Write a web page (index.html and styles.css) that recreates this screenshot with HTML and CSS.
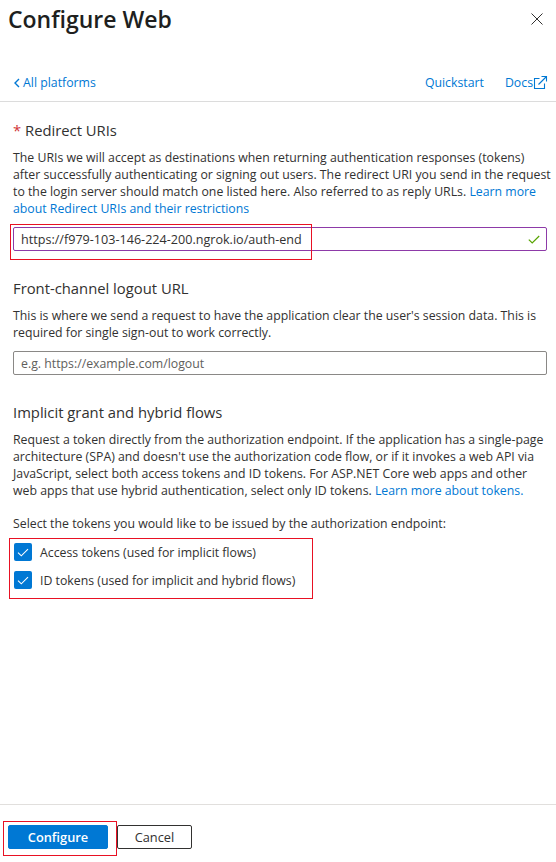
FILE: index.html
```html
<!DOCTYPE html>
<html lang="en">
<head>
<meta charset="utf-8">
<title>Configure Web</title>
<link rel="stylesheet" href="styles.css">
</head>
<body>
<div class="panel">
  <header class="top">
    <h1 class="title">Configure Web</h1>
    <button class="close" aria-label="Close">
      <svg width="12" height="12" viewBox="0 0 12 12"><path d="M0.5 0.5L11.5 11.5M11.5 0.5L0.5 11.5" stroke="#323130" stroke-width="1" fill="none"/></svg>
    </button>
  </header>

  <nav class="subnav">
    <a class="back" href="#">
      <svg width="6" height="10" viewBox="0 0 6 10"><path d="M5 1L1 5l4 4" stroke="#0078d4" stroke-width="1.4" fill="none"/></svg>
      All platforms
    </a>
    <div class="navlinks">
      <a href="#">Quickstart</a>
      <a href="#" class="docs">Docs<svg width="15" height="15" viewBox="0 0 15 15"><path d="M6.5 3.5H1.5V13.5H11.5V8.5" stroke="#0078d4" stroke-width="1.1" fill="none"/><path d="M5.5 9.5L13.5 1.5M8.5 1.5H13.5V6.5" stroke="#0078d4" stroke-width="1.1" fill="none"/></svg></a>
    </div>
  </nav>

  <main class="content">
    <section class="sec">
      <h2 class="heading"><span class="req">*</span> Redirect URIs</h2>
      <p class="desc">The URIs we will accept as destinations when returning authentication responses (tokens) after successfully authenticating or signing out users. The redirect URI you send in the request to the login server should match one listed here. Also referred to as reply URLs. <a href="#">Learn more about Redirect URIs and their restrictions</a></p>
      <div class="field field-valid">
        <span class="value">https://f979-103-146-224-200.ngrok.io/auth-end</span>
        <svg class="ok" width="12" height="9" viewBox="0 0 12 9"><path d="M0.8 4.6L4.2 8 11.2 1" stroke="#57a300" stroke-width="1.2" fill="none"/></svg>
        <span class="mark mark-uri"></span>
      </div>
    </section>

    <section class="sec">
      <h2 class="heading">Front-channel logout URL</h2>
      <p class="desc">This is where we send a request to have the application clear the user's session data. This is required for single sign-out to work correctly.</p>
      <div class="field">
        <span class="placeholder">e.g. https://example.com/logout</span>
      </div>
    </section>

    <section class="sec">
      <h2 class="heading">Implicit grant and hybrid flows</h2>
      <p class="desc">Request a token directly from the authorization endpoint. If the application has a single-page architecture (SPA) and doesn't use the authorization code flow, or if it invokes a web API via JavaScript, select both access tokens and ID tokens. For ASP.NET Core web apps and other web apps that use hybrid authentication, select only ID tokens. <a href="#">Learn more about tokens.</a></p>
      <p class="select-label">Select the tokens you would like to be issued by the authorization endpoint:</p>
      <div class="tokens">
        <label class="check-row">
          <span class="box"><svg width="12" height="9" viewBox="0 0 12 9"><path d="M1 4.6L4.3 7.8 11 1.2" stroke="#fff" stroke-width="1.1" fill="none"/></svg></span>
          Access tokens (used for implicit flows)
        </label>
        <label class="check-row">
          <span class="box"><svg width="12" height="9" viewBox="0 0 12 9"><path d="M1 4.6L4.3 7.8 11 1.2" stroke="#fff" stroke-width="1.1" fill="none"/></svg></span>
          ID tokens (used for implicit and hybrid flows)
        </label>
        <span class="mark mark-tokens"></span>
      </div>
    </section>
  </main>

  <footer class="footer">
    <div class="btn-wrap">
      <button class="btn btn-primary">Configure</button>
      <span class="mark mark-btn"></span>
    </div>
    <button class="btn btn-secondary">Cancel</button>
  </footer>
</div>
</body>
</html>
```

FILE: styles.css
```css
* { box-sizing: border-box; }

html, body {
  margin: 0;
  padding: 0;
  background: #fff;
}

body {
  font-family: "Open Sans", "Noto Sans", sans-serif;
  color: #323130;
  font-size: 12.3px;
}

a { color: #0078d4; text-decoration: none; }

.panel {
  display: flex;
  flex-direction: column;
  height: 100vh;
}

.top {
  display: flex;
  align-items: center;
  justify-content: space-between;
  height: 38px;
  padding: 0 13px 0 8px;
}

.title {
  margin: 0;
  font-size: 23px;
  font-weight: 600;
  line-height: 38px;
  color: #201f1e;
}

.close {
  border: 0;
  background: none;
  padding: 0;
  width: 12px;
  height: 12px;
  display: flex;
}

.subnav {
  height: 64px;
  display: flex;
  align-items: flex-end;
  justify-content: space-between;
  padding: 0 8px 10px 14px;
  border-bottom: 1px solid #dcdcdc;
  line-height: 16px;
}

.back {
  display: flex;
  align-items: center;
  gap: 3px;
}

.navlinks {
  display: flex;
  gap: 21px;
}

.docs {
  display: flex;
  align-items: center;
}

.docs svg { margin-top: -2px; }

.content {
  flex: 1;
  padding: 17px 9px 0 13px;
}

.sec + .sec { margin-top: 26px; }

.heading {
  margin: 0;
  font-size: 14.8px;
  font-weight: 400;
  line-height: 22px;
  color: #323130;
}

.req { color: #d13438; }

.desc {
  margin: 8px -4px 0 0;
  line-height: 17px;
}

.field {
  position: relative;
  margin-top: 10px;
  height: 24px;
  border: 1px solid #8a8886;
  border-radius: 2px;
  display: flex;
  align-items: center;
  justify-content: space-between;
  padding: 0 6px 0 7px;
}

.field-valid { border-color: #8d3aa8; }

.value {
  color: #323130;
  font-size: 12.6px;
}

.placeholder { color: #605e5c; }

.ok { margin-top: 1px; }

.mark {
  position: absolute;
  border: 1px solid #e81123;
  pointer-events: none;
}

.mark-uri {
  left: -4px;
  top: -4px;
  width: 302px;
  height: 36px;
}

.select-label {
  margin: 16px 0 0;
  line-height: 17px;
}

.tokens {
  position: relative;
  margin-top: 6px;
  display: flex;
  flex-direction: column;
}

.check-row {
  display: flex;
  align-items: center;
  gap: 8px;
  height: 28px;
  padding-left: 1px;
}

.box {
  width: 18px;
  height: 18px;
  border-radius: 2px;
  background: #0078d4;
  display: flex;
  align-items: center;
  justify-content: center;
}

.mark-tokens {
  left: -4px;
  top: 0;
  width: 304px;
  height: 61px;
}

.footer {
  border-top: 1px solid #e1dfdd;
  padding: 20px 8px 13px;
  display: flex;
  gap: 9px;
}

.btn-wrap { position: relative; display: flex; }

.btn {
  height: 24px;
  border-radius: 2px;
  font-family: "Open Sans", "Noto Sans", sans-serif;
  font-size: 12.8px;
  padding: 0;
  line-height: 22px;
}

.btn-primary {
  width: 100px;
  background: #0078d4;
  color: #fff;
  border: 1px solid #0078d4;
  font-weight: 600;
}

.btn-secondary {
  width: 75px;
  background: #fff;
  color: #323130;
  border: 1px solid #323130;
}

.mark-btn {
  left: -5px;
  top: -4px;
  width: 114px;
  height: 35px;
}
```
